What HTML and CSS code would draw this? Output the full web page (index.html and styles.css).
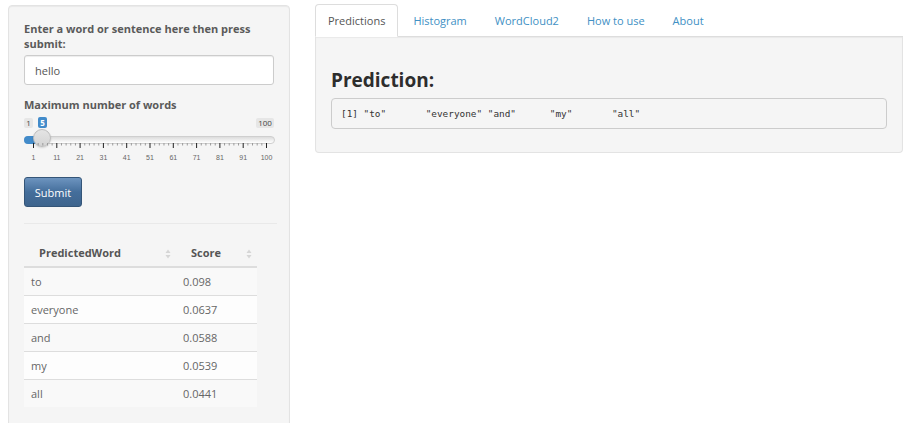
FILE: index.html
```html
<!DOCTYPE html>
<html>
<head>
<meta charset="utf-8">
<link rel="stylesheet" href="styles.css">
</head>
<body>
<div class="page">
  <aside class="sidebar">
    <div class="form-group">
      <label class="label" for="txt">Enter a word or sentence here then press submit:</label>
      <input id="txt" class="text-input" type="text" value="hello">
    </div>
    <div class="form-group slider-group">
      <label class="label">Maximum number of words</label>
      <div class="slider">
        <span class="sl-min">1</span>
        <span class="sl-val">5</span>
        <span class="sl-max">100</span>
        <span class="sl-line"></span>
        <span class="sl-bar"></span>
        <span class="sl-handle"></span>
        <svg class="sl-grid" width="250" height="22" viewBox="0 0 250 22">
          <g class="minor" stroke="#9a9a9a" stroke-width="1">
            <line x1="14.16" y1="0" x2="14.16" y2="2.5"/><line x1="18.82" y1="0" x2="18.82" y2="2.5"/><line x1="23.48" y1="0" x2="23.48" y2="2.5"/><line x1="28.14" y1="0" x2="28.14" y2="2.5"/>
            <line x1="37.46" y1="0" x2="37.46" y2="2.5"/><line x1="42.12" y1="0" x2="42.12" y2="2.5"/><line x1="46.78" y1="0" x2="46.78" y2="2.5"/><line x1="51.44" y1="0" x2="51.44" y2="2.5"/>
            <line x1="60.76" y1="0" x2="60.76" y2="2.5"/><line x1="65.42" y1="0" x2="65.42" y2="2.5"/><line x1="70.08" y1="0" x2="70.08" y2="2.5"/><line x1="74.74" y1="0" x2="74.74" y2="2.5"/>
            <line x1="84.06" y1="0" x2="84.06" y2="2.5"/><line x1="88.72" y1="0" x2="88.72" y2="2.5"/><line x1="93.38" y1="0" x2="93.38" y2="2.5"/><line x1="98.04" y1="0" x2="98.04" y2="2.5"/>
            <line x1="107.36" y1="0" x2="107.36" y2="2.5"/><line x1="112.02" y1="0" x2="112.02" y2="2.5"/><line x1="116.68" y1="0" x2="116.68" y2="2.5"/><line x1="121.34" y1="0" x2="121.34" y2="2.5"/>
            <line x1="130.66" y1="0" x2="130.66" y2="2.5"/><line x1="135.32" y1="0" x2="135.32" y2="2.5"/><line x1="139.98" y1="0" x2="139.98" y2="2.5"/><line x1="144.64" y1="0" x2="144.64" y2="2.5"/>
            <line x1="153.96" y1="0" x2="153.96" y2="2.5"/><line x1="158.62" y1="0" x2="158.62" y2="2.5"/><line x1="163.28" y1="0" x2="163.28" y2="2.5"/><line x1="167.94" y1="0" x2="167.94" y2="2.5"/>
            <line x1="177.26" y1="0" x2="177.26" y2="2.5"/><line x1="181.92" y1="0" x2="181.92" y2="2.5"/><line x1="186.58" y1="0" x2="186.58" y2="2.5"/><line x1="191.24" y1="0" x2="191.24" y2="2.5"/>
            <line x1="200.56" y1="0" x2="200.56" y2="2.5"/><line x1="205.22" y1="0" x2="205.22" y2="2.5"/><line x1="209.88" y1="0" x2="209.88" y2="2.5"/><line x1="214.54" y1="0" x2="214.54" y2="2.5"/>
            <line x1="223.86" y1="0" x2="223.86" y2="2.5"/><line x1="228.52" y1="0" x2="228.52" y2="2.5"/><line x1="233.18" y1="0" x2="233.18" y2="2.5"/><line x1="237.84" y1="0" x2="237.84" y2="2.5"/>
          </g>
          <g class="major" stroke="#222" stroke-width="1">
            <line x1="9.5" y1="0" x2="9.5" y2="5"/><line x1="32.8" y1="0" x2="32.8" y2="5"/><line x1="56.1" y1="0" x2="56.1" y2="5"/><line x1="79.4" y1="0" x2="79.4" y2="5"/><line x1="102.7" y1="0" x2="102.7" y2="5"/><line x1="126" y1="0" x2="126" y2="5"/><line x1="149.3" y1="0" x2="149.3" y2="5"/><line x1="172.6" y1="0" x2="172.6" y2="5"/><line x1="195.9" y1="0" x2="195.9" y2="5"/><line x1="219.2" y1="0" x2="219.2" y2="5"/><line x1="242.5" y1="0" x2="242.5" y2="5"/>
          </g>
          <g class="grid-text">
            <text x="9.5" y="16.5">1</text><text x="32.8" y="16.5">11</text><text x="56.1" y="16.5">21</text><text x="79.4" y="16.5">31</text><text x="102.7" y="16.5">41</text><text x="126" y="16.5">51</text><text x="149.3" y="16.5">61</text><text x="172.6" y="16.5">71</text><text x="195.9" y="16.5">81</text><text x="219.2" y="16.5">91</text><text x="242.5" y="16.5">100</text>
          </g>
        </svg>
      </div>
    </div>
    <button class="btn-submit" type="button">Submit</button>
    <hr class="divider">
    <table class="data-table">
      <thead>
        <tr>
          <th class="col-word">PredictedWord<svg class="sort" width="6" height="10" viewBox="0 0 6 10"><path d="M3 0.5 L5.5 4 L0.5 4 Z M3 9.5 L5.5 6 L0.5 6 Z" fill="#d6d6d6"/></svg></th>
          <th class="col-score">Score<svg class="sort" width="6" height="10" viewBox="0 0 6 10"><path d="M3 0.5 L5.5 4 L0.5 4 Z M3 9.5 L5.5 6 L0.5 6 Z" fill="#d6d6d6"/></svg></th>
        </tr>
      </thead>
      <tbody>
        <tr><td>to</td><td>0.098</td></tr>
        <tr><td>everyone</td><td>0.0637</td></tr>
        <tr><td>and</td><td>0.0588</td></tr>
        <tr><td>my</td><td>0.0539</td></tr>
        <tr><td>all</td><td>0.0441</td></tr>
      </tbody>
    </table>
  </aside>
  <main class="main">
    <ul class="tabs">
      <li class="tab active"><a>Predictions</a></li>
      <li class="tab"><a>Histogram</a></li>
      <li class="tab"><a>WordCloud2</a></li>
      <li class="tab"><a>How to use</a></li>
      <li class="tab"><a>About</a></li>
    </ul>
    <div class="tab-content">
      <h3 class="heading">Prediction:</h3>
      <pre class="output">[1] "to"       "everyone" "and"      "my"       "all"     </pre>
    </div>
  </main>
</div>
</body>
</html>
```

FILE: styles.css
```css
html, body {
  margin: 0;
  padding: 0;
  background: #fff;
}
body {
  font-family: "Open Sans", "Liberation Sans", sans-serif;
  font-size: 11px;
  line-height: 15px;
  color: #666;
}
.page {
  display: flex;
  align-items: flex-start;
  padding-left: 8px;
}
.sidebar {
  box-sizing: border-box;
  width: 282px;
  margin-top: 5px;
  padding: 15px 15px 20px 15px;
  background: #f5f5f5;
  border: 1px solid #e3e3e3;
  border-radius: 4px;
  box-shadow: inset 0 1px 1px rgba(0,0,0,0.05);
}
.form-group {
  display: flex;
  flex-direction: column;
}
.label {
  font-weight: 700;
  color: #5a5a5a;
  margin-bottom: 4px;
}
.text-input {
  box-sizing: border-box;
  width: 250px;
  height: 30px;
  padding: 0 10px;
  border: 1px solid #ccc;
  border-radius: 3px;
  background: #fff;
  font-family: inherit;
  font-size: 11px;
  color: #555;
  box-shadow: inset 0 1px 1px rgba(0,0,0,0.075);
  margin-bottom: 12px;
}
.slider-group .label {
  margin-bottom: 3px;
}
.slider {
  position: relative;
  width: 250px;
  height: 48px;
}
.sl-min, .sl-max, .sl-val {
  position: absolute;
  top: 3px;
  height: 10px;
  line-height: 10px;
  font-size: 8px;
  text-align: center;
  border-radius: 2px;
  background: #e6e6e6;
  color: #444;
}
.sl-min { left: 0; width: 9px; }
.sl-max { right: 0; width: 18px; }
.sl-val {
  top: 2px;
  height: 11px;
  line-height: 11px;
  left: 14px;
  width: 9px;
  background: #428bca;
  color: #fff;
  font-weight: 700;
}
.sl-line {
  position: absolute;
  left: 0;
  right: -1px;
  top: 21px;
  height: 6px;
  border: 1px solid #cfcfcf;
  border-radius: 5px;
  background: linear-gradient(#dcdcdc, #fff);
}
.sl-bar {
  position: absolute;
  left: 0;
  top: 21px;
  width: 18px;
  height: 8px;
  border-radius: 5px 0 0 5px;
  background: #428bca;
}
.sl-handle {
  position: absolute;
  left: 9px;
  top: 14px;
  width: 18px;
  height: 18px;
  box-sizing: border-box;
  border-radius: 50%;
  border: 1px solid #bdbdbd;
  background: linear-gradient(#e4e4e4, #d4d4d4);
  box-shadow: 0 1px 2px rgba(0,0,0,0.15);
}
.sl-grid {
  position: absolute;
  left: 0;
  top: 28px;
}
.grid-text text {
  font-family: "Liberation Sans", sans-serif;
  font-size: 7px;
  fill: #666;
  text-anchor: middle;
}
.btn-submit {
  align-self: flex-start;
  box-sizing: border-box;
  width: 58px;
  height: 30px;
  margin-top: 14px;
  padding: 0;
  border: 1px solid #345578;
  border-radius: 3px;
  background: linear-gradient(#6d94bf, #446e9b 50%, #3e648d);
  color: #fff;
  font-family: inherit;
  font-size: 11px;
  display: block;
}
.divider {
  margin: 16px 0 15px 0;
  border: 0;
  border-top: 1px solid #e9e9e9;
  width: 253px;
}
.data-table {
  border-collapse: collapse;
  width: 233px;
}
.data-table th {
  font-weight: 700;
  color: #555;
  text-align: left;
  padding: 6px 0 6px 15px;
  border-bottom: 2px solid #ddd;
  position: relative;
}
.col-word { width: 137px; }
.col-score { width: 66px; }
.sort {
  position: absolute;
  right: 5px;
  top: 10px;
}
.data-table td {
  padding: 6px 0 6px 7px;
  border-top: 1px solid #ddd;
  color: #666;
}
.data-table tbody tr:first-child td { border-top: 0; }
.data-table tbody tr:nth-child(odd) { background: #f9f9f9; }
.data-table tbody tr:nth-child(even) { background: #fdfdfd; }

.main {
  width: 588px;
  margin-left: 25px;
  margin-top: 4px;
}
.tabs {
  list-style: none;
  margin: 0;
  padding: 0;
  display: flex;
  border-bottom: 1px solid #ddd;
}
.tab {
  margin-right: 2px;
  margin-bottom: -1px;
}
.tab a {
  display: block;
  padding: 8px 12px;
  line-height: 15px;
  border: 1px solid transparent;
  border-radius: 4px 4px 0 0;
  color: #4190c4;
}
.tab.active a {
  background: #fff;
  border-color: #ddd;
  border-bottom-color: transparent;
  color: #555;
}
.tab-content {
  box-sizing: border-box;
  height: 116px;
  padding: 15px;
  background: #f5f5f5;
  border: 1px solid #e3e3e3;
  border-top: 0;
  border-radius: 0 0 4px 4px;
  box-shadow: inset 0 1px 1px rgba(0,0,0,0.05);
}
.heading {
  margin: 18px 0 7px 0;
  font-size: 19px;
  line-height: 21px;
  font-weight: 700;
  color: #2d2d2d;
}
.output {
  margin: 0;
  padding: 8px 9px;
  font-family: "DejaVu Sans Mono", "Liberation Mono", monospace;
  font-size: 9.4px;
  line-height: 13px;
  color: #333;
  background: #f5f5f5;
  border: 1px solid #ccc;
  border-radius: 4px;
  white-space: pre;
}
```
